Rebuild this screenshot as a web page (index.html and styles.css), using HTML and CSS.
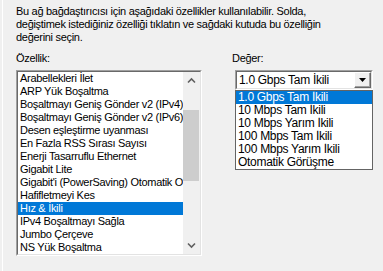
FILE: index.html
```html
<!DOCTYPE html>
<html>
<head>
<meta charset="utf-8">
<link rel="stylesheet" href="styles.css">
</head>
<body>
<div class="page">
  <p class="desc">Bu ağ bağdaştırıcısı için aşağıdaki özellikler kullanılabilir. Solda, değiştimek istediğiniz özelliği tıklatın ve sağdaki kutuda bu özelliğin değerini seçin.</p>
  <div class="props">
    <div class="col-left">
      <div class="label">Özellik:</div>
      <div class="listbox">
        <div class="listbox-inner">
          <ul class="items">
            <li>Arabellekleri İlet</li>
            <li>ARP Yük Boşaltma</li>
            <li>Boşaltmayı Geniş Gönder v2 (IPv4)</li>
            <li>Boşaltmayı Geniş Gönder v2 (IPv6)</li>
            <li>Desen eşleştirme uyanması</li>
            <li>En Fazla RSS Sırası Sayısı</li>
            <li>Enerji Tasarruflu Ethernet</li>
            <li>Gigabit Lite</li>
            <li>Gigabit'i (PowerSaving) Otomatik Olarak Kapat</li>
            <li>Hafifletmeyi Kes</li>
            <li class="sel">Hız &amp; İkili</li>
            <li>IPv4 Boşaltmayı Sağla</li>
            <li>Jumbo Çerçeve</li>
            <li>NS Yük Boşaltma</li>
          </ul>
          <div class="vscroll">
            <div class="sb-btn"><svg width="17" height="17" viewBox="0 0 17 17"><polyline points="5,10.5 8.5,7 12,10.5" fill="none" stroke="#606060" stroke-width="1.6"/></svg></div>
            <div class="sb-track"><div class="sb-thumb"></div></div>
            <div class="sb-btn"><svg width="17" height="17" viewBox="0 0 17 17"><polyline points="5,6.5 8.5,10 12,6.5" fill="none" stroke="#606060" stroke-width="1.6"/></svg></div>
          </div>
        </div>
      </div>
    </div>
    <div class="col-right">
      <div class="label">Değer:</div>
      <div class="combo-wrap">
        <div class="combo">
          <div class="combo-inner">
            <span class="combo-text">1.0 Gbps Tam İkili</span>
            <div class="combo-btn"><svg width="7" height="4" viewBox="0 0 7 4"><polygon points="0,0 7,0 3.5,4" fill="#000"/></svg></div>
          </div>
        </div>
        <ul class="dropdown">
          <li class="sel">1.0 Gbps Tam İkili</li>
          <li>10 Mbps Tam İkili</li>
          <li>10 Mbps Yarım İkili</li>
          <li>100 Mbps Tam İkili</li>
          <li>100 Mbps Yarım İkili</li>
          <li>Otomatik Görüşme</li>
        </ul>
      </div>
    </div>
  </div>
</div>
</body>
</html>
```

FILE: styles.css
```css
html, body {
  margin: 0;
  padding: 0;
  background: #f0f0f0;
}
body {
  font-family: "Liberation Sans", Arial, sans-serif;
  font-size: 11px;
  line-height: 13px;
  letter-spacing: -0.3px;
  color: #000;
  width: 383px;
  height: 271px;
  overflow: hidden;
}
.page {
  margin-left: 2px;
  border-left: 1px solid #ffffff;
  padding: 5px 0 0 13px;
  height: 266px;
}
.desc {
  margin: 0;
  width: 312px;
}
.props {
  display: flex;
  gap: 30px;
  margin-top: 8px;
}
.col-left {
  width: 186px;
}
.label {
  height: 13px;
  margin-bottom: 5px;
}
.listbox {
  width: 186px;
  height: 186px;
  box-sizing: border-box;
  border-top: 1px solid #a0a0a0;
  border-left: 1px solid #a0a0a0;
  border-right: 1px solid #ffffff;
  border-bottom: 1px solid #ffffff;
}
.listbox-inner {
  height: 100%;
  box-sizing: border-box;
  border-top: 1px solid #696969;
  border-left: 1px solid #696969;
  border-right: 1px solid #e3e3e3;
  border-bottom: 1px solid #e3e3e3;
  background: #fff;
  display: flex;
}
.items {
  list-style: none;
  margin: 0;
  padding: 0;
  flex: 1;
  min-width: 0;
  overflow: hidden;
}
.items li, .dropdown li {
  height: 13px;
  white-space: nowrap;
  overflow: hidden;
  padding-left: 2px;
}
.sel {
  background: #0078d7;
  color: #fff;
}
.vscroll {
  width: 17px;
  background: #f0f0f0;
  display: flex;
  flex-direction: column;
}
.sb-btn {
  height: 17px;
  display: flex;
}
.sb-track {
  flex: 1;
  padding-top: 21px;
}
.sb-thumb {
  height: 71px;
  margin: 0 1px 0 0;
  background: #cdcdcd;
}
.col-right {
  width: 141px;
}
.combo-wrap {
  position: relative;
  margin-left: 3px;
  width: 138px;
}
.combo {
  height: 20px;
  box-sizing: border-box;
  border-top: 1px solid #a0a0a0;
  border-left: 1px solid #a0a0a0;
  border-right: 1px solid #ffffff;
  border-bottom: 1px solid #ffffff;
}
.combo-inner {
  height: 100%;
  box-sizing: border-box;
  border-top: 1px solid #696969;
  border-left: 1px solid #696969;
  border-right: 1px solid #e3e3e3;
  border-bottom: 1px solid #e3e3e3;
  background: #fff;
  display: flex;
  align-items: center;
}
.combo-text {
  flex: 1;
  padding-left: 2px;
  font-size: 12px;
}
.combo-btn {
  width: 17px;
  height: 16px;
  box-sizing: border-box;
  background: #f0f0f0;
  border-top: 1px solid #ffffff;
  border-left: 1px solid #ffffff;
  border-right: 1px solid #696969;
  border-bottom: 1px solid #696969;
  box-shadow: inset -1px -1px 0 #a0a0a0;
  display: flex;
  align-items: center;
  justify-content: center;
}
.dropdown {
  position: absolute;
  left: 0;
  top: 20px;
  width: 138px;
  box-sizing: border-box;
  margin: 0;
  padding: 0;
  list-style: none;
  background: #fff;
  border: 1px solid #646464;
  font-size: 12px;
}
.dropdown li {
  padding-left: 2px;
}
```
